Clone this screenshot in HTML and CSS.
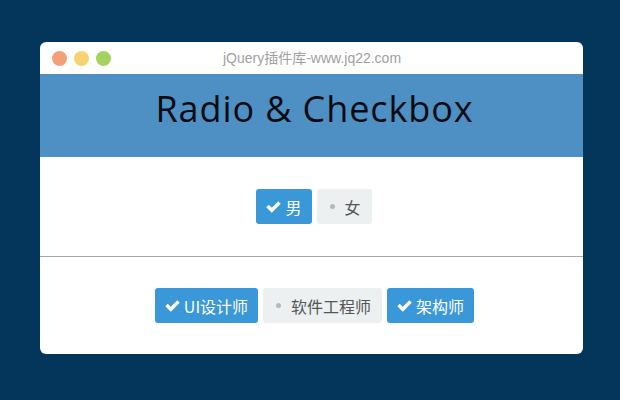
FILE: index.html
```html
<!DOCTYPE html>
<html>
<head>
<meta charset="utf-8">
<link rel="stylesheet" href="styles.css">
</head>
<body>
<div class="window">
  <div class="titlebar">
    <div class="dots">
      <span class="dot red"></span><span class="dot yellow"></span><span class="dot green"></span>
    </div>
    <div class="title">jQuery插件库-www.jq22.com</div>
  </div>
  <div class="header">Radio &amp; Checkbox</div>
  <div class="section">
    <span class="btn on"><svg class="chk" viewBox="0 0 16 16"><path d="M1.2 8.6 L3.5 6.3 L6.4 9.2 L12.5 3.1 L14.8 5.4 L6.4 13.8 Z" fill="#fff"/></svg>男</span>
    <span class="btn off"><span class="bullet"></span>女</span>
  </div>
  <div class="divider"></div>
  <div class="section second">
    <span class="btn on"><svg class="chk" viewBox="0 0 16 16"><path d="M1.2 8.6 L3.5 6.3 L6.4 9.2 L12.5 3.1 L14.8 5.4 L6.4 13.8 Z" fill="#fff"/></svg>UI设计师</span>
    <span class="btn off"><span class="bullet"></span>软件工程师</span>
    <span class="btn on"><svg class="chk" viewBox="0 0 16 16"><path d="M1.2 8.6 L3.5 6.3 L6.4 9.2 L12.5 3.1 L14.8 5.4 L6.4 13.8 Z" fill="#fff"/></svg>架构师</span>
  </div>
</div>
</body>
</html>
```
FILE: styles.css
```css
html, body {
  margin: 0;
  padding: 0;
  background: #04355a;
  width: 620px;
  height: 400px;
  overflow: hidden;
}
.window {
  margin: 42px 0 0 40px;
  width: 543px;
  height: 312px;
  background: #fff;
  border-radius: 6px;
  overflow: hidden;
  font-family: "Microsoft YaHei", "Noto Sans CJK SC", sans-serif;
}
.titlebar {
  height: 32px;
  position: relative;
  display: flex;
  align-items: center;
}
.dots {
  display: flex;
  gap: 7px;
  padding-left: 12px;
}
.dot {
  width: 15px;
  height: 15px;
  border-radius: 50%;
  display: block;
}
.red { background: #f59f79; }
.yellow { background: #f6d372; }
.green { background: #a5d25e; }
.title {
  position: absolute;
  left: 0;
  right: 0;
  top: 0;
  line-height: 32px;
  text-align: center;
  font-family: "Liberation Sans", "Noto Sans CJK SC", sans-serif;
  font-size: 14px;
  color: #a0a0a0;
  padding-left: 1px;
}
.header {
  height: 83px;
  background: #4e90c3;
  color: #060b12;
  font-family: "Open Sans", "Noto Sans", sans-serif;
  font-size: 36px;
  letter-spacing: 0.9px;
  line-height: 70px;
  text-align: center;
  padding-left: 6px;
}
.section {
  height: 99px;
  display: flex;
  justify-content: center;
  align-items: center;
  gap: 5px;
  padding-left: 5px;
}
.second {
  height: 97px;
  padding-left: 6px;
}
.divider {
  height: 1px;
  background: #a8a8a8;
}
.btn {
  height: 35px;
  display: inline-flex;
  align-items: center;
  padding: 0 11px;
  border-radius: 3px;
  font-size: 16px;
  box-sizing: border-box;
}
.btn.on {
  background: #3a98d9;
  color: #fff;
  padding-left: 9px;
  padding-right: 10px;
}
.btn.off {
  background: #ecf0f1;
  color: #555;
  padding-left: 13px;
}
.chk {
  width: 17px;
  height: 17px;
  margin-right: 3px;
}
.bullet {
  width: 5px;
  height: 5px;
  border-radius: 50%;
  background: #b6b9ba;
  margin-right: 10px;
}
```
